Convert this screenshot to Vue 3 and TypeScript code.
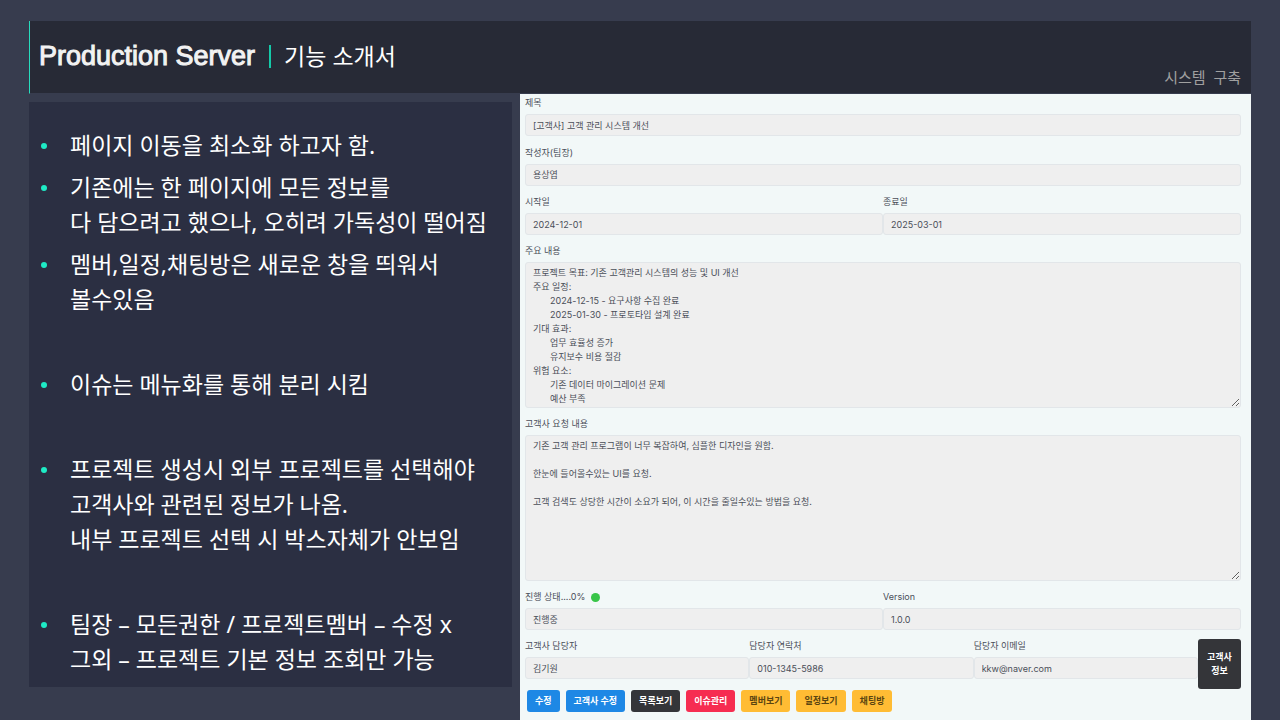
<script setup lang="ts">
import { ref } from 'vue'

interface Note {
  lines: string[]
  section?: boolean
}

const notes: Note[] = [
  { lines: ['페이지 이동을 최소화 하고자 함.'] },
  { lines: ['기존에는 한 페이지에 모든 정보를', '다 담으려고 했으나, 오히려 가독성이 떨어짐'] },
  { lines: ['멤버,일정,채팅방은 새로운 창을 띄워서', '볼수있음'] },
  { lines: ['이슈는 메뉴화를 통해 분리 시킴'], section: true },
  {
    lines: [
      '프로젝트 생성시 외부 프로젝트를 선택해야',
      '고객사와 관련된 정보가 나옴.',
      '내부 프로젝트 선택 시 박스자체가 안보임',
    ],
    section: true,
  },
  { lines: ['팀장 – 모든권한 / 프로젝트멤버 – 수정 x', '그외 – 프로젝트 기본 정보 조회만 가능'], section: true },
]

const project = ref({
  title: '[고객사] 고객 관리 시스템 개선',
  author: '용상엽',
  start: '2024-12-01',
  end: '2025-03-01',
  content: [
    '프로젝트 목표: 기존 고객관리 시스템의 성능 및 UI 개선',
    '주요 일정:',
    '\t2024-12-15 - 요구사항 수집 완료',
    '\t2025-01-30 - 프로토타입 설계 완료',
    '기대 효과:',
    '\t업무 효율성 증가',
    '\t유지보수 비용 절감',
    '위험 요소:',
    '\t기존 데이터 마이그레이션 문제',
    '\t예산 부족',
  ].join('\n'),
  request: [
    '기존 고객 관리 프로그램이 너무 복잡하여, 심플한 디자인을 원함.',
    '',
    '한눈에 들어올수있는 UI를 요청.',
    '',
    '고객 검색도 상당한 시간이 소요가 되어, 이 시간을 줄일수있는 방법을 요청.',
  ].join('\n'),
  status: '진행중',
  version: '1.0.0',
  manager: '김기원',
  phone: '010-1345-5986',
  email: 'kkw@naver.com',
})

const actions = [
  { label: '수정', tone: 'blue' },
  { label: '고객사 수정', tone: 'blue' },
  { label: '목록보기', tone: 'dark' },
  { label: '이슈관리', tone: 'red' },
  { label: '멤버보기', tone: 'amber' },
  { label: '일정보기', tone: 'amber' },
  { label: '채팅방', tone: 'amber' },
]
</script>

<template>
  <main class="slide">
    <header class="header">
      <h1 class="title">Production Server</h1>
      <span class="divider"></span>
      <p class="subtitle">기능 소개서</p>
      <p class="topic">시스템&nbsp; 구축</p>
    </header>

    <div class="columns">
      <section class="notes">
        <ul class="note-list">
          <li v-for="(note, i) in notes" :key="i" class="note" :class="{ section: note.section }">
            <div>
              <p v-for="line in note.lines" :key="line">{{ line }}</p>
            </div>
          </li>
        </ul>
      </section>

      <form class="form" @submit.prevent>
        <div class="field">
          <label for="title">제목</label>
          <input id="title" v-model="project.title" type="text" readonly />
        </div>
        <div class="field">
          <label for="author">작성자(팀장)</label>
          <input id="author" v-model="project.author" type="text" readonly />
        </div>
        <div class="row">
          <div class="field">
            <label for="start">시작일</label>
            <input id="start" v-model="project.start" type="text" readonly />
          </div>
          <div class="field">
            <label for="end">종료일</label>
            <input id="end" v-model="project.end" type="text" readonly />
          </div>
        </div>
        <div class="field">
          <label for="content">주요 내용</label>
          <textarea id="content" v-model="project.content" readonly></textarea>
        </div>
        <div class="field">
          <label for="request">고객사 요청 내용</label>
          <textarea id="request" v-model="project.request" readonly></textarea>
        </div>
        <div class="row">
          <div class="field">
            <label for="status">진행 상태....0% <span class="dot"></span></label>
            <input id="status" v-model="project.status" type="text" readonly />
          </div>
          <div class="field">
            <label for="version">Version</label>
            <input id="version" v-model="project.version" type="text" readonly />
          </div>
        </div>
        <div class="row">
          <div class="field">
            <label for="manager">고객사 담당자</label>
            <input id="manager" v-model="project.manager" type="text" readonly />
          </div>
          <div class="field">
            <label for="phone">담당자 연락처</label>
            <input id="phone" v-model="project.phone" type="text" readonly />
          </div>
          <div class="field">
            <label for="email">담당자 이메일</label>
            <input id="email" v-model="project.email" type="text" readonly />
          </div>
          <button type="button" class="btn dark customer">고객사<br />정보</button>
        </div>
        <div class="actions">
          <button v-for="a in actions" :key="a.label" type="button" class="btn" :class="a.tone">{{ a.label }}</button>
        </div>
      </form>
    </div>
  </main>
</template>

<style>
body {
  margin: 0;
  background: #373c4e;
}
</style>

<style scoped>
* {
  box-sizing: border-box;
}

.slide {
  display: flex;
  flex-direction: column;
  min-height: 100vh;
  padding: 21px 29px 0;
  background: #373c4e;
  color: #fff;
  font-family: 'Noto Sans', 'Noto Sans CJK KR', sans-serif;
}

h1,
p,
ul {
  margin: 0;
  padding: 0;
}

.header {
  display: flex;
  align-items: center;
  height: 73px;
  padding: 0 10px 2px 9px;
  border-left: 1px solid #27dcbd;
  border-bottom: 1px solid #373c4e;
  background: #272a36;
}

.title {
  font-family: 'Liberation Sans', Arial, sans-serif;
  font-size: 27px;
  font-weight: 400;
  line-height: 34px;
  color: #f2f2f2;
  -webkit-text-stroke: 1px #f2f2f2;
}

.divider {
  width: 2px;
  height: 23px;
  margin: 0 13px 0 14px;
  background: #14c9a8;
}

.subtitle {
  font-size: 23px;
  line-height: 34px;
}

.topic {
  align-self: flex-end;
  margin-left: auto;
  font-size: 15px;
  line-height: 28px;
  color: #a0a0a0;
}

.columns {
  flex: 1;
  display: grid;
  grid-template-columns: 483fr 731fr;
  gap: 8px;
}

.notes {
  margin: 8px 0 33px;
  padding: 26px 10px 8px 12px;
  background: #2b2f42;
}

.note-list {
  display: flex;
  flex-direction: column;
  gap: 7px;
  list-style: none;
}

.note {
  display: flex;
  gap: 23px;
  font-size: 23px;
  line-height: 35px;
  white-space: nowrap;
}

.note::before {
  content: '';
  flex: none;
  width: 6px;
  height: 6px;
  margin-top: 15px;
  border-radius: 50%;
  background: #1eebc5;
}

.note.section {
  margin-top: 43px;
}

.form {
  display: flex;
  flex-direction: column;
  gap: 9px;
  min-width: 0;
  padding: 2px 10px 8px 5px;
  background: #f2f8f8;
  font-family: Inter, 'Noto Sans CJK KR', sans-serif;
  font-size: 9px;
  color: #4a4e58;
}

.row {
  display: flex;
  align-items: flex-start;
}

.field {
  flex: 1;
  display: flex;
  flex-direction: column;
  gap: 4px;
  min-width: 0;
}

label {
  display: flex;
  align-items: center;
  height: 14px;
  line-height: 14px;
}

input,
textarea {
  display: block;
  width: 100%;
  margin: 0;
  border: 1px solid #e2e6e9;
  border-radius: 3px;
  outline: none;
  background: #efefef;
  color: #4a4e58;
  font: inherit;
}

input {
  height: 22px;
  padding: 0 7px;
}

textarea {
  height: 146px;
  padding: 3px 7px 0;
  line-height: 14px;
  tab-size: 17px;
  resize: vertical;
  overflow: hidden;
}

.dot {
  width: 9px;
  height: 9px;
  margin-left: 6px;
  border-radius: 50%;
  background: #38c549;
}

.btn {
  height: 22px;
  padding: 0 8px;
  border: 0;
  border-radius: 3px;
  font: inherit;
  font-weight: 700;
  line-height: 14px;
  white-space: nowrap;
}

.btn.blue {
  background: #1e88e5;
  color: #fff;
}

.btn.dark {
  background: #343539;
  color: #fff;
}

.btn.red {
  background: #f62d51;
  color: #fff;
}

.btn.amber {
  background: #ffbc34;
  color: #5a4511;
}

.btn.customer {
  width: 43px;
  height: 50px;
}

.actions {
  display: flex;
  gap: 6px;
  margin: -8px 0 0 2px;
}
</style>
